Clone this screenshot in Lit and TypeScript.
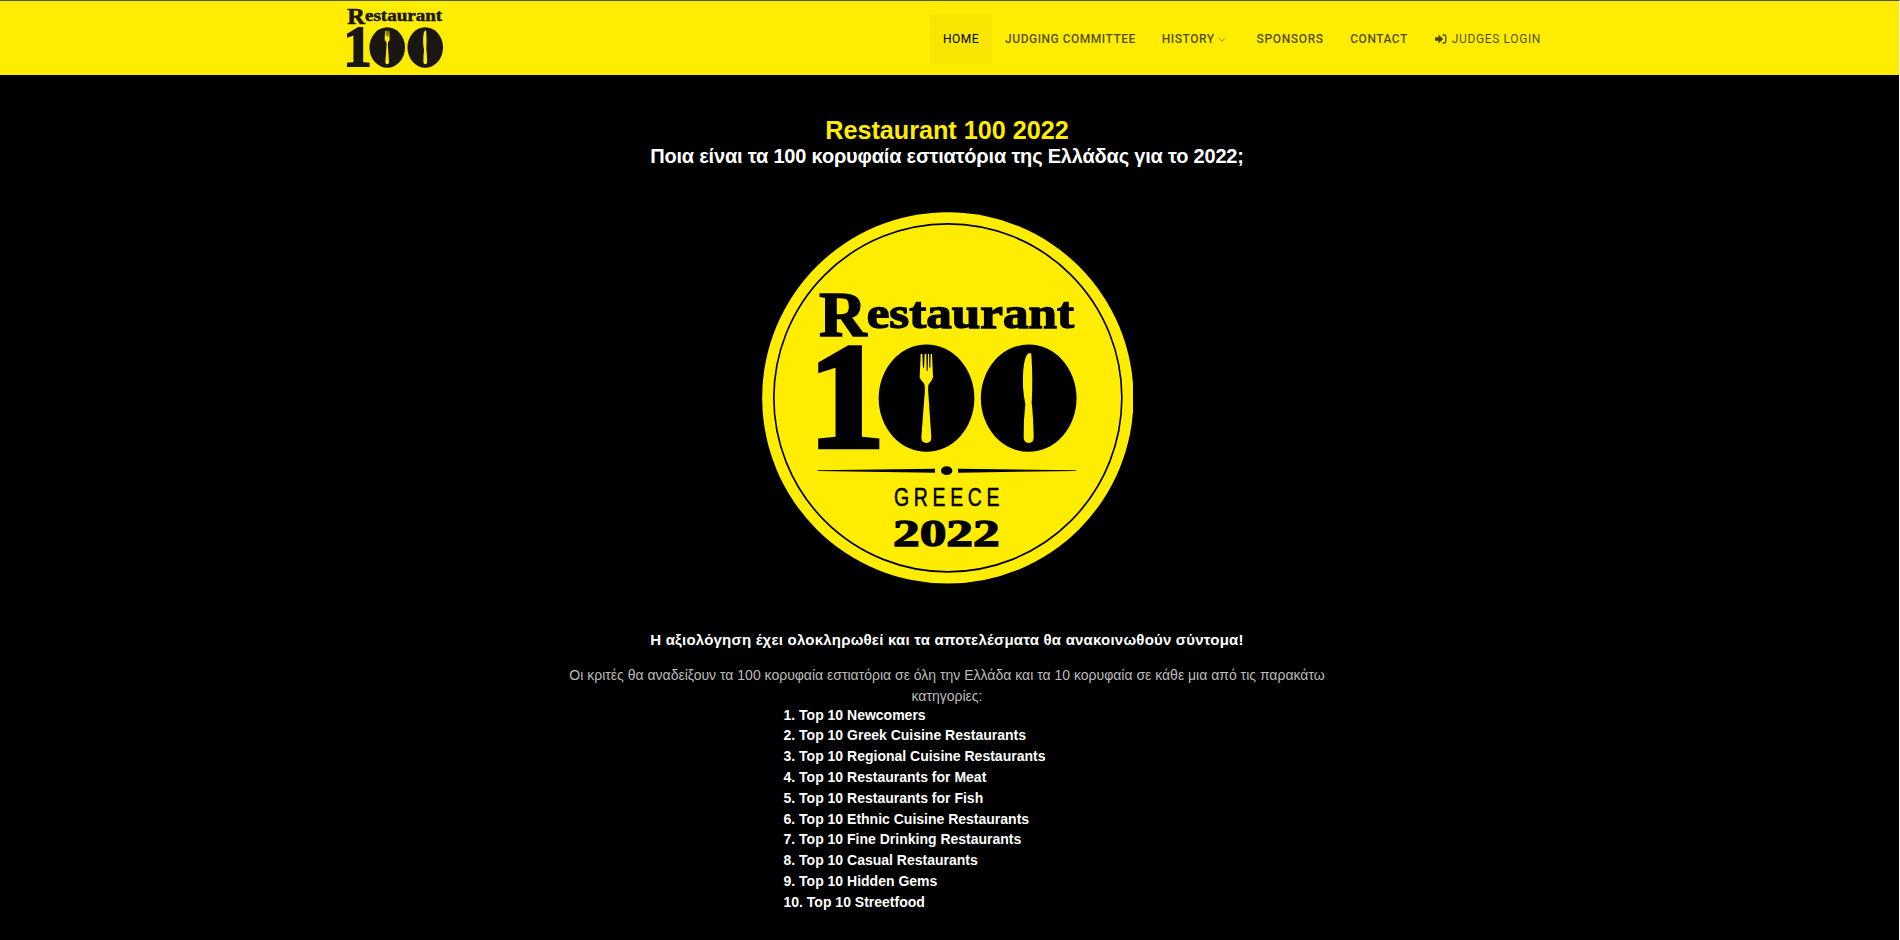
import { LitElement, html, css, svg } from "lit";
import { customElement } from "lit/decorators.js";

const lockup = svg`
  <g class="ink">
    <text class="didone" x="208" y="408" font-size="190" textLength="142" lengthAdjust="spacingAndGlyphs" stroke-width="5">R</text>
    <text class="didone" x="350" y="383" font-size="136" textLength="622" lengthAdjust="spacingAndGlyphs" stroke-width="4">estaurant</text>
    <g transform="translate(175 741) scale(1.015 1)">
      <text class="didone" x="0" y="0" font-size="453" stroke-width="14">1</text>
    </g>
    <ellipse cx="529.5" cy="594.5" rx="143.5" ry="161"/>
    <ellipse cx="836" cy="594.5" rx="143.5" ry="161"/>
  </g>
  <g class="cut">
    <path d="M512 462 L517 462 L519 503 L522 503 L524 462 L529 462 L530 512 L533 512 L534 462 L537 462 L538 503 L541 503 L542 462 L546 462 L549 530 Q548 538 537 552 Q533 556 535 580 L544 712 Q544 729 529 729 Q514 729 514 712 L524 580 Q526 556 521 549 Q509 536 509 530 Z"/>
    <path d="M844 463 Q841 456 833 462 Q817 480 819 560 Q821 590 826 612 Q820 660 821 712 Q822 729 836 729 Q851 729 851 712 Q850 650 845 610 Q849 540 844 463 Z"/>
  </g>`;

@customElement("app-root")
export class AppRoot extends LitElement {
  static styles = css`
    :host {
      display: block;
      box-sizing: border-box;
      height: 940px;
      overflow: hidden;
      background: #000;
      border-top: 1px solid #555;
      border-right: 1px solid #f4f4f4;
      font-family: "Liberation Sans", Arial, sans-serif;
      color: #fff;
    }
    header {
      height: 74px;
      background: #ffed00;
    }
    .bar {
      width: 1212px;
      margin-left: 342px;
      height: 74px;
      display: flex;
      justify-content: space-between;
      align-items: center;
    }
    .logo { width: 101.5px; height: 74px; display: block; }
    nav {
      display: flex;
      margin-top: 2px;
      font-family: Roboto, "Liberation Sans", sans-serif;
      font-size: 12px;
      font-weight: 500;
      letter-spacing: 0.5px;
      line-height: 50px;
    }
    nav a {
      display: flex;
      align-items: center;
      padding: 0 13px;
      color: rgba(0, 0, 0, 0.7);
      white-space: nowrap;
    }
    nav a.active { color: #000; background: #f7e600; font-weight: 400; }
    nav a.sponsors { letter-spacing: 0.65px; padding-right: 13.5px; }
    nav a.login { font-weight: 400; letter-spacing: 0.62px; }
    .chev { width: 8px; height: 6px; margin: 2px 4.5px 0 3.5px; }
    .enter { width: 13px; height: 12px; margin-right: 5px; }
    main {
      width: 1894px;
      display: flex;
      flex-direction: column;
      align-items: center;
      text-align: center;
    }
    h1 { margin: 41px 0 0; font-size: 25.2px; line-height: 28px; color: #ffed00; }
    h2 { margin: 0; font-size: 20px; line-height: 24px; letter-spacing: -0.19px; }
    .badge { display: block; width: 371.7px; height: 371.7px; margin: 44px 0 0 1px; }
    .done { margin: 46px 0 0; font-size: 15px; line-height: 20px; font-weight: 700; letter-spacing: 0.21px; }
    .lead { margin: 15px 0 0; width: 780px; font-size: 14px; line-height: 21px; color: #bbb; }
    ol {
      list-style: none;
      margin: -2px 0 0 -31px;
      padding: 0;
      width: 296px;
      text-align: left;
      font-size: 14px;
      line-height: 20.8px;
      font-weight: 700;
    }
    .ink { fill: #000; }
    .cut { fill: #ffed00; }
    .didone {
      font-family: "Liberation Serif", serif;
      font-weight: 700;
      stroke: #000;
    }
    .logo .ink, .logo .didone { fill: #1a1713; stroke: #1a1713; }
    .logo ellipse { stroke: none; }
    .greece { font-family: "Liberation Sans", sans-serif; stroke: #000; stroke-width: 1.6; }
  `;

  categories = [
    "Newcomers",
    "Greek Cuisine Restaurants",
    "Regional Cuisine Restaurants",
    "Restaurants for Meat",
    "Restaurants for Fish",
    "Ethnic Cuisine Restaurants",
    "Fine Drinking Restaurants",
    "Casual Restaurants",
    "Hidden Gems",
    "Streetfood",
  ];

  render() {
    return html`
      <header>
        <div class="bar">
          <svg class="logo" viewBox="165 224 818 590" preserveAspectRatio="none">${lockup}</svg>
          <nav>
            <a class="active">HOME</a>
            <a>JUDGING COMMITTEE</a>
            <a>HISTORY
              <svg class="chev" viewBox="0 0 8 6"><path d="M1 1.2 L4 4.2 L7 1.2" fill="none" stroke="#8d8300" stroke-width="1"/></svg></a>
            <a class="sponsors">SPONSORS</a>
            <a>CONTACT</a>
            <a class="login">
              <svg class="enter" viewBox="0 0 13 12">
                <path d="M1 4.3 H4.5 V1.6 L9.3 6 L4.5 10.4 V7.7 H1 Z" fill="#4d4700"/>
                <path d="M8.6 2 H10.3 Q11.8 2 11.8 3.5 V8.5 Q11.8 10 10.3 10 H8.6" fill="none" stroke="#4d4700" stroke-width="1.3"/>
              </svg>JUDGES LOGIN</a>
          </nav>
        </div>
      </header>
      <main>
        <h1>Restaurant 100 2022</h1>
        <h2>Ποια είναι τα 100 κορυφαία εστιατόρια της Ελλάδας για το 2022;</h2>
        <svg class="badge" viewBox="35 36 1115 1115">
          <circle cx="592.5" cy="593.5" r="557" fill="#ffed00"/>
          <circle cx="592.5" cy="593.5" r="522" fill="none" stroke="#000" stroke-width="5"/>
          <g transform="translate(-1 0)">
            ${lockup}
            <path d="M202 811 L555 806 V818 L202 813 Z M978 811 L624 806 V818 L978 813 Z"/>
            <ellipse cx="590" cy="812" rx="17" ry="13"/>
            <g transform="translate(432 919) scale(.74 1)">
              <text class="greece" x="0" y="0" font-size="79" textLength="428" lengthAdjust="spacing">GREECE</text>
            </g>
            <text class="didone" x="429" y="1037" font-size="116" textLength="320" lengthAdjust="spacingAndGlyphs" stroke-width="4">2022</text>
          </g>
        </svg>
        <p class="done">Η αξιολόγηση έχει ολοκληρωθεί και τα αποτελέσματα θα ανακοινωθούν σύντομα!</p>
        <p class="lead">Οι κριτές θα αναδείξουν τα 100 κορυφαία εστιατόρια σε όλη την Ελλάδα και τα 10 κορυφαία σε κάθε μια από τις παρακάτω κατηγορίες:</p>
        <ol>
          ${this.categories.map((name, i) => html`<li>${i + 1}. Top 10 ${name}</li>`)}
        </ol>
      </main>
    `;
  }
}
